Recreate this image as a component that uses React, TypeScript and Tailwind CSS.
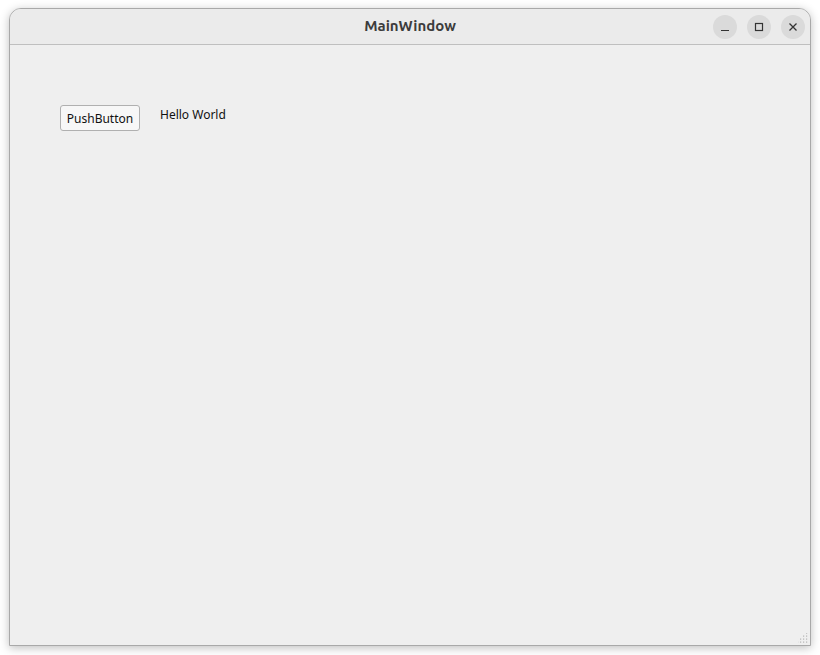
import React from "react";

export default function App() {
  return (
    <div className="w-[820px] h-[655px] bg-[#ffffff] relative overflow-hidden" style={{ fontFamily: '"Noto Sans", "Open Sans", sans-serif' }}>
      <div className="absolute left-[9px] top-[8px] w-[802px] h-[638px] rounded-t-[12px] border border-[#a9a9a9] bg-[#efefef] shadow-[0_2px_10px_rgba(0,0,0,0.25)] flex flex-col overflow-hidden">
        <div className="h-[36px] shrink-0 bg-[#ebebeb] border-b border-[#bfbfbf] relative flex items-center justify-center">
          <span className="text-[15px] font-bold text-[#3c3c3c]" style={{ fontFamily: '"Ubuntu", "Noto Sans", sans-serif' }}>MainWindow</span>
          <div className="absolute right-[5px] top-[6px] flex gap-[10px]">
            <div className="w-[24px] h-[24px] rounded-full bg-[#dadada] flex items-center justify-center">
              <svg width="10" height="10" viewBox="0 0 10 10"><path d="M1 8.5h8" stroke="#333" strokeWidth="1.2" /></svg>
            </div>
            <div className="w-[24px] h-[24px] rounded-full bg-[#dadada] flex items-center justify-center">
              <svg width="10" height="10" viewBox="0 0 10 10"><rect x="1.5" y="1.5" width="7" height="7" fill="none" stroke="#333" strokeWidth="1.2" /></svg>
            </div>
            <div className="w-[24px] h-[24px] rounded-full bg-[#dadada] flex items-center justify-center">
              <svg width="10" height="10" viewBox="0 0 10 10"><path d="M1.5 1.5l7 7M8.5 1.5l-7 7" stroke="#333" strokeWidth="1.3" /></svg>
            </div>
          </div>
        </div>
        <div className="flex-1 relative">
          <div className="flex items-start pl-[50px] pt-[60px]">
            <button className="w-[80px] h-[26px] pt-[2px] border border-[#b0b0b0] rounded-[3px] bg-[#f7f7f7] text-[12px] text-[#111] leading-none flex items-center justify-center">PushButton</button>
            <span className="ml-[20px] -mt-[3px] text-[12px] text-[#111] leading-[26px]">Hello World</span>
          </div>
          <svg className="absolute right-[2px] bottom-[2px]" width="10" height="10" viewBox="0 0 10 10">
            {[[8,0],[5,3],[8,3],[2,6],[5,6],[8,6],[-1,9],[2,9],[5,9],[8,9]].map(([x,y],i)=>(<rect key={i} x={x} y={y-0.5} width="1.2" height="1.2" fill="#b5b5b5" />))}
          </svg>
        </div>
      </div>
    </div>
  );
}
